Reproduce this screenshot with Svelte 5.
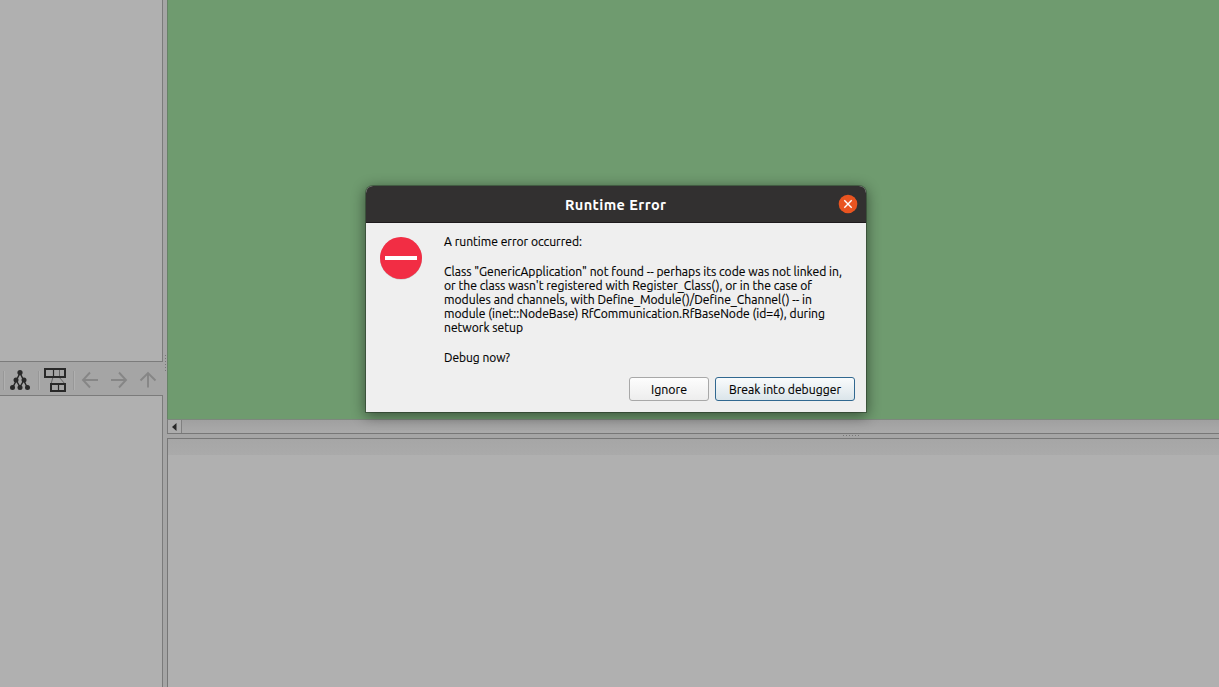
<script>
  const paragraphs = [
    [['A runtime error occurred:', 138]],
    [
      ['Class "GenericApplication" not found -- perhaps its code was not linked in,', 398],
      ["or the class wasn't registered with Register_Class(), or in the case of", 368],
      ['modules and channels, with Define_Module()/Define_Channel() -- in', 368],
      ['module (inet::NodeBase) RfCommunication.RfBaseNode (id=4), during', 381],
      ['network setup', 79]
    ],
    [['Debug now?', 66]]
  ];
</script>

{#snippet fitted(text, width)}
  <svg class="fitted" {width} height="14"><text x="0" y="11" textLength={width} lengthAdjust="spacingAndGlyphs">{text}</text></svg>
{/snippet}

<main>
  <aside>
    <div class="tree"></div>
    <div class="toolbar">
      <svg width="162" height="33" viewBox="0 362 162 33" fill="none">
        <path d="M3.5 371v19M38.5 371v19M73.5 371v19" stroke="#989898" />
        <path d="M4.5 371v19M39.5 371v19M74.5 371v19" stroke="#b0b0b0" />
        <path d="M20 373l-7 14M20 373l7 14M16 380l4 7M24 380l-4 7" stroke="#292929" stroke-width="1.5" />
        <g fill="#292929">
          <circle cx="20" cy="372.6" r="2.6" /><circle cx="16" cy="380" r="2.5" /><circle cx="24" cy="380" r="2.5" />
          <circle cx="12.5" cy="387.6" r="2.5" /><circle cx="20" cy="387.6" r="2.5" /><circle cx="27.5" cy="387.6" r="2.5" />
        </g>
        <path d="M53 377l-2 7M59 377l6 7" stroke="#666" />
        <path d="M45 369h20v8H45zM51 384h14v7H51z" stroke="#292929" stroke-width="2" />
        <path d="M53.5 369v8M58.5 384v7" stroke="#292929" stroke-width="1.2" /><path d="M59.5 370v6" stroke="#666" />
        <g stroke="#868686" stroke-width="1.9">
          <path d="M98 380H83.5M90 372.5l-7 7.5 7 7.5" />
          <path d="M111 380h14.500M119 372.500l7 7.500-7 7.500" />
          <path d="M148 387.500V373.500M140.500 380.500l7.500-7.500 7.500 7.500" />
        </g>
      </svg>
    </div>
    <div class="details"></div>
  </aside>
  <div class="splitter">
    <svg width="4" height="18"><path d="M2.500 0v18" stroke="#777" stroke-dasharray="1 2" /></svg>
  </div>
  <section>
    <div class="canvas"></div>
    <div class="scrollbar">
      <div class="arrow"><svg width="5" height="8"><path d="M4.500 0v8L0 4z" fill="#282828" /></svg></div>
    </div>
    <div class="hsplit"><svg width="18" height="4"><path d="M0 1.500h18" stroke="#777" stroke-dasharray="1 2" /></svg></div>
    <div class="log"><div class="loghead"></div></div>
  </section>

  <div class="dialog">
    <header>
      <svg class="title" width="102" height="20"><text x="0" y="15" textLength="101" lengthAdjust="spacing">Runtime Error</text></svg>
      <div class="close"><svg width="20" height="20"><circle cx="10" cy="10" r="9.300" fill="#e95420" /><path d="M6.300 6.300l7.400 7.400M13.700 6.300l-7.400 7.400" stroke="#fff" stroke-width="1.400" /></svg></div>
    </header>
    <div class="body">
      <svg class="stop" width="42" height="43"><circle cx="21" cy="21.500" r="21" fill="#bdbdbd" /><circle cx="21" cy="21" r="21" fill="#f22d44" /><path d="M5 21h32" stroke="#fff" stroke-width="4" /></svg>
      <div class="message">
        {#each paragraphs as lines}
          <div class="paragraph">
            {#each lines as [text, width]}{@render fitted(text, width)}{/each}
          </div>
        {/each}
      </div>
    </div>
    <footer>
      <button class="ignore">{@render fitted('Ignore', 36)}</button>
      <button class="break">{@render fitted('Break into debugger', 112)}</button>
    </footer>
  </div>
</main>

<style>
  :global(body) { margin: 0; }
  main { position: relative; width: 1219px; height: 687px; overflow: hidden; display: flex; background: #a5a5a5; font-family: Ubuntu, "Noto Sans", sans-serif; }
  svg { display: block; flex: none; }
  aside { width: 163px; flex: none; display: flex; flex-direction: column; }
  .tree { height: 361px; background: #b0b0b0; border-right: 1px solid #7b7b7b; border-bottom: 1px solid #7b7b7b; }
  .toolbar { height: 33px; }
  .details { flex: 1; background: #b0b0b0; border-top: 1px solid #7b7b7b; border-right: 1px solid #7b7b7b; }
  .splitter { width: 4px; flex: none; box-sizing: border-box; padding-top: 355px; }
  section { flex: 1; display: flex; flex-direction: column; }
  .canvas { height: 419px; background: #6f9b6f; border-left: 1px solid #668266; }
  .scrollbar { height: 14px; box-sizing: border-box; border-left: 1px solid #7b7b7b; border-top: 1px solid #7d877d; background: linear-gradient(#a0a0a0, #aaa); }
  .arrow { width: 13px; height: 13px; display: grid; place-items: center; border-right: 1px solid #808080; background: #acacac; }
  .hsplit { height: 4px; border-top: 1px solid #777; padding-left: 676px; }
  .log { flex: 1; border-top: 1px solid #777; border-left: 1px solid #777; background: #b0b0b0; }
  .loghead { height: 16px; background: linear-gradient(#a6a6a6, #aaa); }
  .dialog { position: absolute; left: 366px; top: 186px; width: 500px; height: 226px; border-radius: 7px 7px 0 0; background: #efefef; box-shadow: 0 0 0 1px rgba(0,0,0,.28), 0 3px 14px 1px rgba(0,0,0,.48); display: flex; flex-direction: column; }
  header { height: 36px; flex: none; display: grid; grid-template-columns: 1fr 102px 1fr; align-items: center; background: #323030; border-bottom: 1px solid #1e1a1d; border-radius: 7px 7px 0 0; }
  .title { grid-column: 2; fill: #fff; font-size: 14.5px; font-weight: 700; margin-top: 2px; }
  .close { justify-self: end; margin-right: 8px; }
  .body { height: 154px; box-sizing: border-box; padding: 14px 14px 0; display: flex; gap: 22px; }
  .message { display: flex; flex-direction: column; gap: 16px; margin-top: -2px; }
  .fitted { font-size: 13px; fill: #000; stroke: #000; stroke-width: .15px; overflow: visible; }
  footer { display: flex; justify-content: flex-end; gap: 6px; padding-right: 11px; }
  button { height: 24px; padding: 2px 0 0; box-sizing: border-box; border: 1px solid #a8a8a8; border-radius: 3px; display: grid; place-items: center; background: linear-gradient(#fdfdfd, #ededed); font: inherit; }
  .ignore { width: 80px; }
  .break { width: 140px; border-color: #316890; background: linear-gradient(#f9fbfc, #dbe5ea); }
</style>
